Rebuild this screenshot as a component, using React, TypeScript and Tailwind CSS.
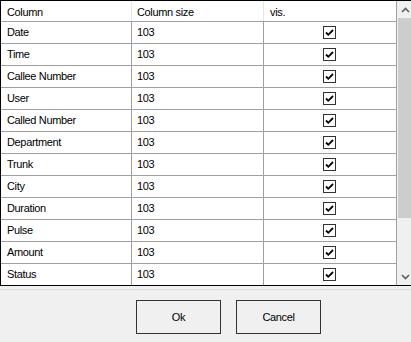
import React from "react";

const rows = [
  "Date",
  "Time",
  "Callee Number",
  "User",
  "Called Number",
  "Department",
  "Trunk",
  "City",
  "Duration",
  "Pulse",
  "Amount",
  "Status",
];

function Check() {
  return (
    <div className="w-[13px] h-[13px] border border-[#333333] bg-white flex items-center justify-center">
      <svg width="11" height="11" viewBox="0 0 11 11">
        <path d="M2 5.5 L4.3 7.8 L9 3" stroke="#000" strokeWidth="1.8" fill="none" />
      </svg>
    </div>
  );
}

export default function App() {
  return (
    <div
      className="w-[411px] h-[342px] bg-[#f0f0f0] overflow-hidden text-[11px] tracking-[-0.35px] text-black"
      style={{ fontFamily: '"Liberation Sans", Arial, sans-serif' }}
    >
      <div className="w-[415px] h-[286px] border border-black bg-white flex">
        <div className="w-[396px] flex flex-col">
          <div className="h-[21px] flex border-b border-[#a0a0a0] bg-white">
            <div className="w-[131px] pl-[6px] pt-[3px] border-r border-[#e5e5e5]">Column</div>
            <div className="w-[132px] pl-[5px] pt-[3px] border-r border-[#e5e5e5]">Column size</div>
            <div className="flex-1 pl-[6px] pt-[3px]">vis.</div>
          </div>
          {rows.map((r, i) => (
            <div
              key={r}
              className={
                i < rows.length - 1
                  ? "h-[22px] flex border-b border-[#a0a0a0]"
                  : "h-[21px] flex"
              }
            >
              <div className="w-[131px] pl-[6px] flex items-center border-r border-[#a0a0a0]">{r}</div>
              <div className="w-[132px] pl-[5px] flex items-center border-r border-[#a0a0a0]">103</div>
              <div className="flex-1 flex items-center justify-center pr-[1px]">
                <Check />
              </div>
            </div>
          ))}
        </div>
        <div className="w-[1px] bg-[#a0a0a0]" />
        <div className="w-[17px] bg-[#f0f0f0] flex flex-col">
          <div className="h-[17px] flex items-center justify-center">
            <svg width="9" height="6" viewBox="0 0 9 6">
              <path d="M1 5 L4.5 1.5 L8 5" stroke="#606060" strokeWidth="1.6" fill="none" />
            </svg>
          </div>
          <div className="h-[200px] mx-[1px] bg-[#cdcdcd]" />
          <div className="flex-1" />
          <div className="h-[17px] flex items-center justify-center">
            <svg width="9" height="6" viewBox="0 0 9 6">
              <path d="M1 1 L4.5 4.5 L8 1" stroke="#606060" strokeWidth="1.6" fill="none" />
            </svg>
          </div>
        </div>
      </div>
      <div className="h-[3px]" />
      <div className="h-[1px] bg-[#dcdcdc]" />
      <div className="flex gap-[15px] pl-[136px] pt-[10px]">
        <button className="w-[85px] h-[34px] border border-[#333333] bg-[#f0f0f0] text-[11px]">Ok</button>
        <button className="w-[85px] h-[34px] border border-[#333333] bg-[#f0f0f0] text-[11px]">Cancel</button>
      </div>
    </div>
  );
}
